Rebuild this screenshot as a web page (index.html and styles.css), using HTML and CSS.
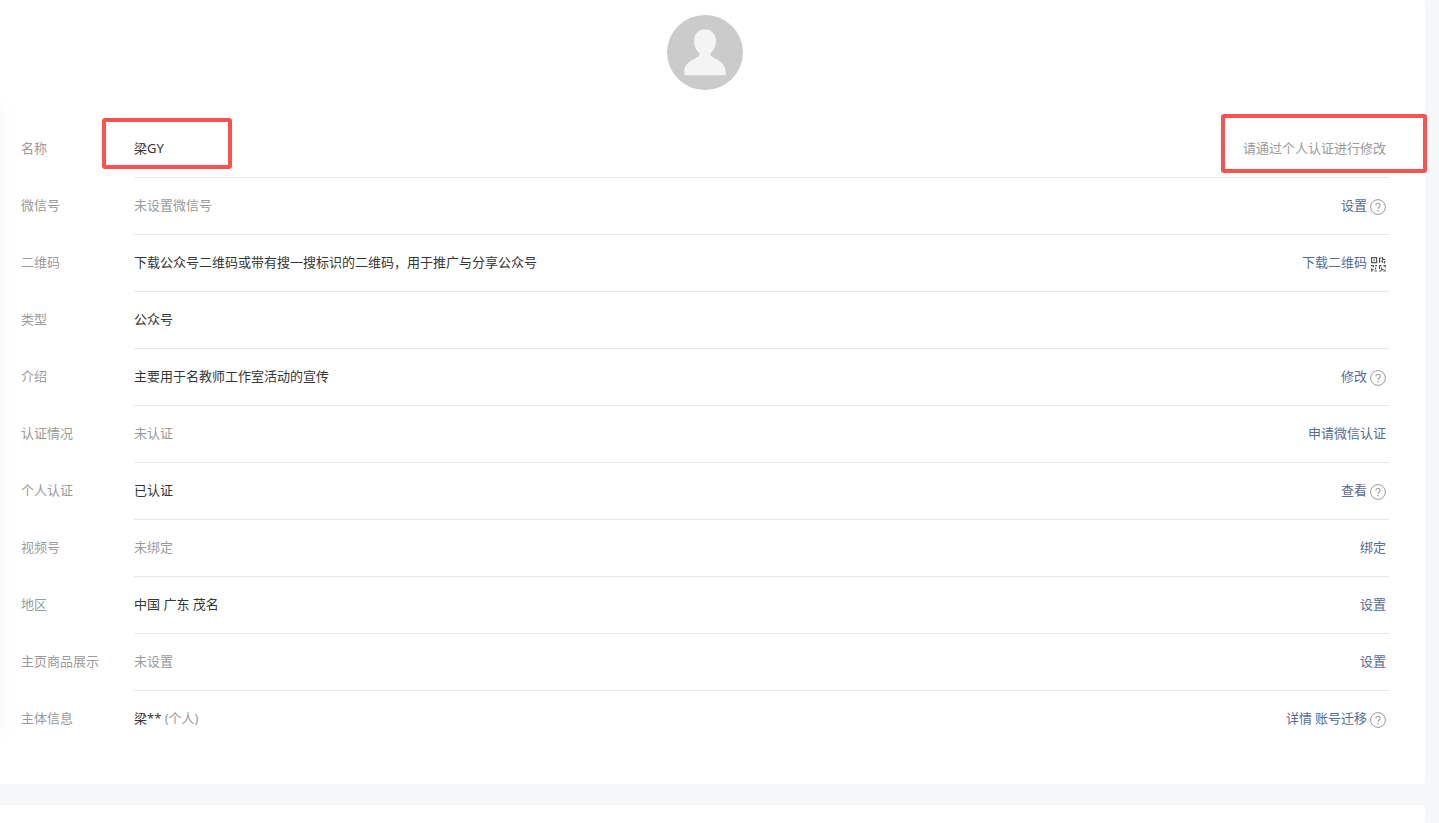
FILE: index.html
```html
<!DOCTYPE html>
<html lang="zh-CN">
<head>
  <meta charset="UTF-8">
  <title>账号详情</title>
  <link rel="stylesheet" href="styles.css">
</head>
<body>
  <!-- 图标 -->
  <svg class="sprite" width="0" height="0">
    <symbol id="icon-help" viewBox="0 0 16 16">
      <circle cx="8" cy="8" r="7.4" fill="none" stroke="#9a9a9a" stroke-width="1"/>
      <path d="M5.9 6.4a2.1 2.1 0 1 1 3.5 1.5c-.8.7-1.3 1-1.3 2" fill="none" stroke="#9a9a9a" stroke-width="1.1"/>
      <rect x="7.4" y="11" width="1.3" height="1.3" fill="#9a9a9a"/>
    </symbol>
  </svg>

  <main class="card account">
    <div class="avatar">
      <svg width="76" height="75" viewBox="0 0 76 76" preserveAspectRatio="none">
        <circle cx="38" cy="38" r="38" fill="#cbcbcb"/>
        <path d="M38 14.500c6.300 0 11 5 11 11.500 0 5.600-2.300 10-5.500 12.800v2.200c1.500 2.500 15.200 5.500 15.200 16.500v3.500H17.300v-3.500c0-11 13.700-14 15.200-16.500v-2.200C29.300 36 27 31.600 27 26c0-6.500 4.700-11.500 11-11.500z" fill="#f4f4f4"/>
      </svg>
    </div>

    <div class="list">
      <div class="row">
        <div class="label">名称</div>
        <div class="content">
          <div class="value">梁GY</div>
          <div class="action tip">请通过个人认证进行修改</div>
          <span class="mark mark-name"></span>
          <span class="mark mark-tip"></span>
        </div>
      </div>
      <div class="row">
        <div class="label">微信号</div>
        <div class="content">
          <div class="value empty">未设置微信号</div>
          <div class="action"><a href="#">设置</a><svg class="icon"><use href="#icon-help"/></svg></div>
        </div>
      </div>
      <div class="row">
        <div class="label">二维码</div>
        <div class="content">
          <div class="value">下载公众号二维码或带有搜一搜标识的二维码，用于推广与分享公众号</div>
          <div class="action">
            <a href="#">下载二维码</a>
            <svg class="icon" viewBox="0 0 16 16" fill="none" stroke="#555" stroke-width="1.200">
              <path d="M1.600 1.600h5v5h-5zM3.400 4.100h1.600M9.600 7V2.400M9 2h2.400M12.600 1v2.400h2.600M11 5h1.600v2M14.600 5v2.400M1 9.600h2.400v1.600M5 9.600h2M1.600 12.400v1.200h2M5.600 11.600v2M1 15h1.600M4.600 15h2.400M9.600 13V9.600h2M13.400 9.600h1.900v2M11.600 11.600v2h2M9 15h2.400M15 13.400V15h-1.600"/>
            </svg>
          </div>
        </div>
      </div>
      <div class="row">
        <div class="label">类型</div>
        <div class="content">
          <div class="value">公众号</div>
        </div>
      </div>
      <div class="row">
        <div class="label">介绍</div>
        <div class="content">
          <div class="value">主要用于名教师工作室活动的宣传</div>
          <div class="action"><a href="#">修改</a><svg class="icon"><use href="#icon-help"/></svg></div>
        </div>
      </div>
      <div class="row">
        <div class="label">认证情况</div>
        <div class="content">
          <div class="value empty">未认证</div>
          <div class="action"><a href="#">申请微信认证</a></div>
        </div>
      </div>
      <div class="row">
        <div class="label">个人认证</div>
        <div class="content">
          <div class="value">已认证</div>
          <div class="action"><a href="#">查看</a><svg class="icon"><use href="#icon-help"/></svg></div>
        </div>
      </div>
      <div class="row">
        <div class="label">视频号</div>
        <div class="content">
          <div class="value empty">未绑定</div>
          <div class="action"><a href="#">绑定</a></div>
        </div>
      </div>
      <div class="row">
        <div class="label">地区</div>
        <div class="content">
          <div class="value">中国 广东 茂名</div>
          <div class="action"><a href="#">设置</a></div>
        </div>
      </div>
      <div class="row">
        <div class="label">主页商品展示</div>
        <div class="content">
          <div class="value empty">未设置</div>
          <div class="action"><a href="#">设置</a></div>
        </div>
      </div>
      <div class="row">
        <div class="label">主体信息</div>
        <div class="content">
          <div class="value">梁** <span class="empty">(个人)</span></div>
          <div class="action"><a href="#">详情</a><a href="#">账号迁移</a><svg class="icon"><use href="#icon-help"/></svg></div>
        </div>
      </div>
    </div>
  </main>

  <section class="card next"></section>
</body>
</html>
```

FILE: styles.css
```css
* {
  box-sizing: border-box;
}

body {
  margin: 0;
  min-height: 100vh;
  padding-right: 14px;
  display: flex;
  flex-direction: column;
  gap: 21px;
  overflow: hidden;
  background-color: #f6f7f9;
  color: #353535;
  font-family: "Noto Sans", "Noto Sans CJK SC", sans-serif;
  font-size: 13px;
  line-height: 20px;
}

a {
  color: #576b95;
  text-decoration: none;
}

.sprite {
  position: absolute;
}

.card {
  background: #fff;
  border-radius: 0 3px 3px 0;
}

.account {
  position: relative;
  padding: 15px 36px 37px 21px;
}

/* 左侧淡阴影 */
.account::before {
  content: "";
  position: absolute;
  top: 105px;
  bottom: 50px;
  left: -20px;
  width: 20px;
  box-shadow: 0 0 20px rgba(0, 0, 0, 0.04);
}

.next {
  flex: 1;
}

.avatar {
  display: flex;
  justify-content: center;
  margin-bottom: 31px;
}

.row {
  display: flex;
}

.label {
  width: 113px;
  padding: 17px 0 19px;
  color: #9a9a9a;
}

.content {
  position: relative;
  flex: 1;
  display: flex;
  justify-content: space-between;
  padding: 17px 3px 19px 0;
  border-bottom: 1px solid #e7e7eb;
}

.row:last-child .content {
  border-bottom: none;
}

.empty,
.tip {
  color: #9a9a9a;
}

.action {
  display: flex;
  align-items: center;
  gap: 3px;
}

.icon {
  width: 16px;
  height: 16px;
  margin-top: 3px;
}

.mark {
  position: absolute;
  border: 4px solid #fa5151;
  border-radius: 3px;
}

.mark-name {
  top: -3px;
  left: -32px;
  width: 130px;
  height: 51px;
}

.mark-tip {
  top: -7px;
  right: -38px;
  width: 206px;
  height: 59px;
}
```
